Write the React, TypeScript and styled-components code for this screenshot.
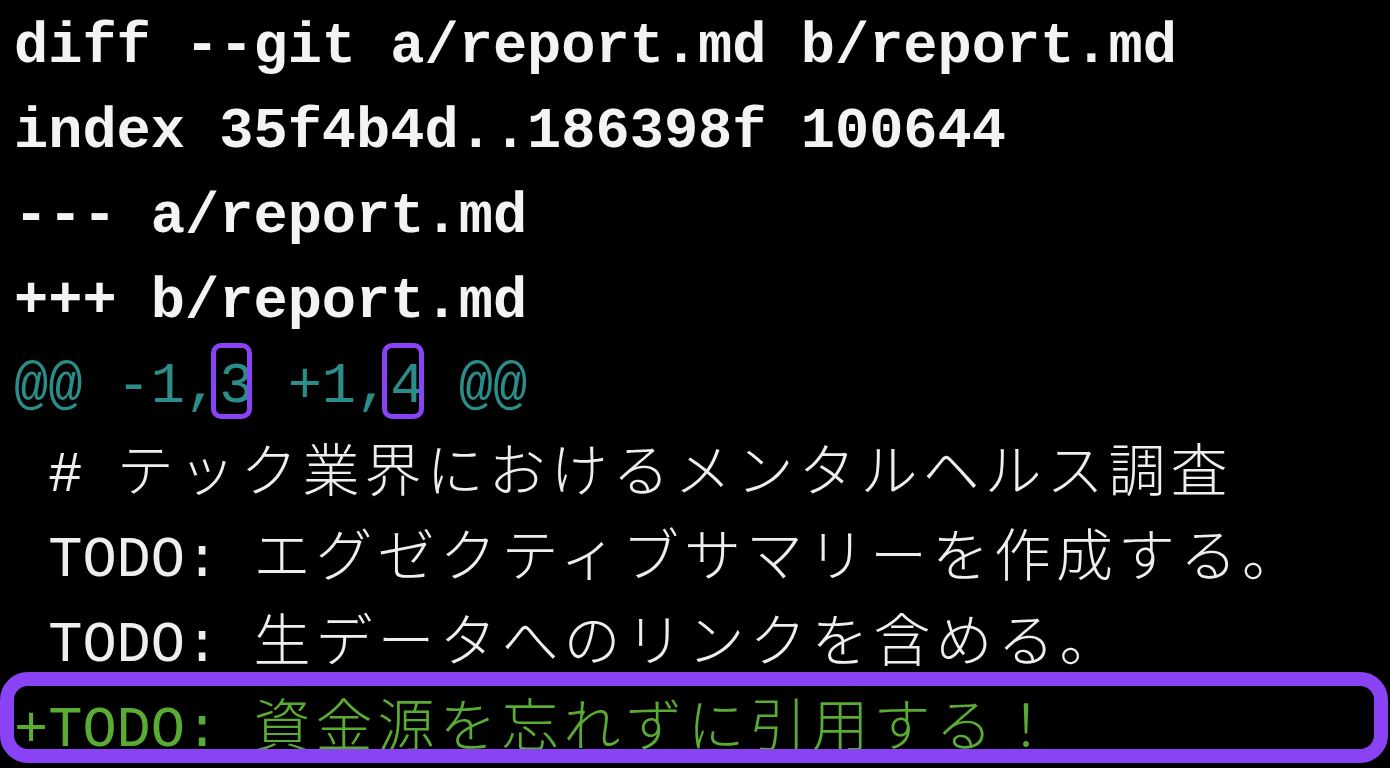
import React from "react";
import styled, { createGlobalStyle } from "styled-components";

const Global = createGlobalStyle`
  html, body {
    margin: 0;
    padding: 0;
    background: #000;
  }
  body {
    width: 1390px;
    height: 768px;
    overflow: hidden;
  }
`;

const MONO = `"Courier New", "Nimbus Mono PS", "Nimbus Mono L", "FreeMono", "Liberation Mono", monospace`;

const Screen = styled.div`
  background: #000;
  width: 1390px;
  height: 768px;
  padding-top: 5px;
  box-sizing: border-box;
  display: flex;
  flex-direction: column;
`;

type Tone = "header" | "hunk" | "context" | "added";

const toneColor: Record<Tone, string> = {
  header: "#f3f3f3",
  hunk: "#2b8d8a",
  context: "#eeeeee",
  added: "#5aab33",
};

const Row = styled.div<{ $tone: Tone }>`
  flex: none;
  box-sizing: border-box;
  height: 85px;
  line-height: 85px;
  padding-left: 14px;
  padding-top: ${(p) => (p.$tone === "context" || p.$tone === "added" ? 4 : 0)}px;
  white-space: pre;
  font-family: ${MONO};
  font-size: 57px;
  font-weight: ${(p) => (p.$tone === "header" ? 700 : 400)};
  color: ${(p) => toneColor[p.$tone]};
  position: relative;
`;

const AddedRow = styled(Row)`
  &::after {
    content: "";
    position: absolute;
    left: 0;
    right: 2px;
    top: -13px;
    bottom: 7px;
    border: 14px solid #8a43f4;
    border-radius: 28px;
    pointer-events: none;
  }
`;

const Jp = styled.span`
  font-family: "Noto Sans CJK JP", sans-serif;
  font-size: 57px;
  line-height: 57px;
  letter-spacing: 5px;
  font-weight: 300;
`;

const Boxed = styled.span`
  position: relative;
  display: inline-block;
  height: 85px;
  &::after {
    content: "";
    position: absolute;
    left: -8px;
    right: 1px;
    top: -2px;
    bottom: 11px;
    border: 5px solid #8a43f4;
    border-radius: 10px;
  }
`;

export default function App() {
  return (
    <>
      <Global />
      <Screen>
        <Row $tone="header">diff --git a/report.md b/report.md</Row>
        <Row $tone="header">index 35f4b4d..186398f 100644</Row>
        <Row $tone="header">--- a/report.md</Row>
        <Row $tone="header">+++ b/report.md</Row>
        <Row $tone="hunk">
          {"@@ -1,"}
          <Boxed>3</Boxed>
          {" +1,"}
          <Boxed>4</Boxed>
          {" @@"}
        </Row>
        <Row $tone="context">
          {" # "}
          <Jp>テック業界におけるメンタルヘルス調査</Jp>
        </Row>
        <Row $tone="context">
          {" TODO: "}
          <Jp>エグゼクティブサマリーを作成する。</Jp>
        </Row>
        <Row $tone="context">
          {" TODO: "}
          <Jp>生データへのリンクを含める。</Jp>
        </Row>
        <AddedRow $tone="added">
          {"+TODO: "}
          <Jp>資金源を忘れずに引用する！</Jp>
        </AddedRow>
      </Screen>
    </>
  );
}
